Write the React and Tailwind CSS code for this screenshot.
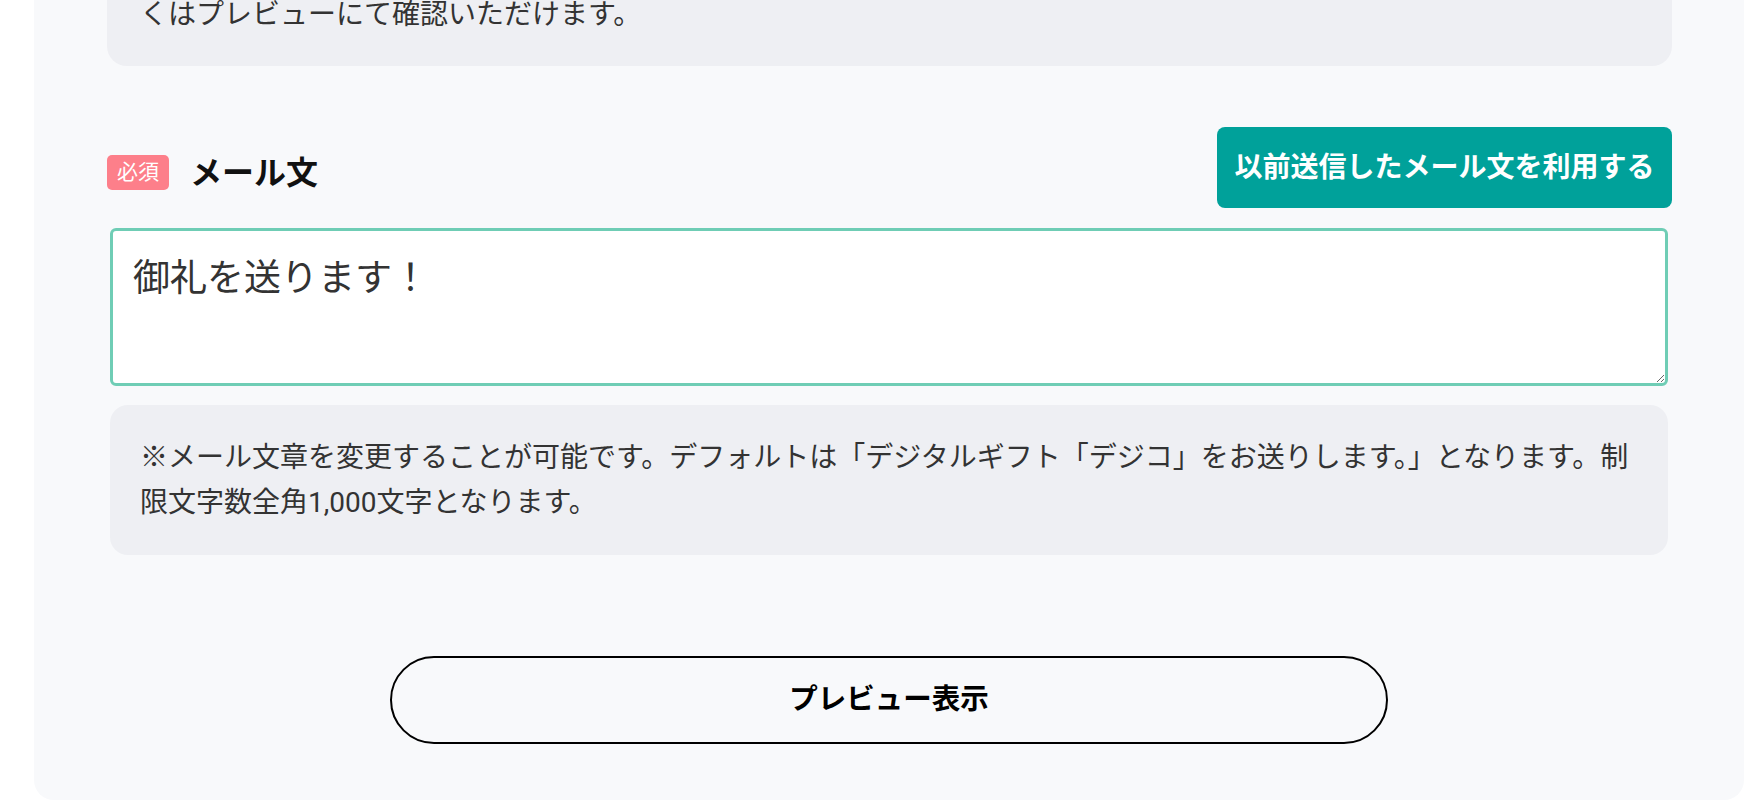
import React from "react";

const FONT = { fontFamily: '"Roboto", "Noto Sans CJK JP", sans-serif' };

const RequiredBadge = () => (
	<span className="flex h-[35px] items-center rounded-[5px] bg-[#fd7f8a] px-[10px] text-[21px] leading-none text-white">
		必須
	</span>
);

const App = () => {
	return (
		<div className="h-[802px] overflow-hidden bg-white" style={FONT}>
			<div className="-mt-[60px] mr-[18px] ml-[34px] rounded-b-[20px] bg-[#f8f9fb] px-[72px] pb-[56px]">
				{/* previous note, top part scrolled off */}
				<div className="ml-[1px] rounded-b-[20px] bg-[#eeeff3] px-[33px] pt-[61px] pb-[37px] text-[28px] leading-[28px] text-[#333]">
					くはプレビューにて確認いただけます。
				</div>

				{/* header */}
				<div className="mt-[61px] ml-[1px] flex items-center justify-between">
					<div className="flex items-center gap-[21px] pt-[10px]">
						<RequiredBadge />
						<h2 className="text-[32px] font-bold leading-none text-[#111]">
							メール文
						</h2>
					</div>
					<button className="flex h-[81px] w-[455px] items-center justify-center rounded-[8px] bg-[#00a19a] text-[28px] font-bold text-white">
						以前送信したメール文を利用する
					</button>
				</div>

				<textarea
					defaultValue="御礼を送ります！"
					className="mx-[4px] mt-[20px] block h-[158px] w-[calc(100%-8px)] rounded-[6px] border-[3px] border-[#6fcdb5] bg-white px-[20px] pt-[20px] text-[37px] leading-[1.5] text-[#333] outline-none"
					style={FONT}
				/>

				<div className="mx-[4px] mt-[19px] rounded-[18px] bg-[#eeeff3] py-[30px] pr-[14px] pl-[30px] text-[28px] leading-[45px] text-[#333]">
					※メール文章を変更することが可能です。デフォルトは「デジタルギフト「デジコ」をお送りします。」となります。制限文字数全角1,000文字となります。
				</div>

				<div className="mt-[101px] flex justify-center">
					<button className="flex h-[88px] w-[998px] items-center justify-center rounded-full border-2 border-black text-[28.5px] font-bold text-black">
						プレビュー表示
					</button>
				</div>
			</div>
		</div>
	);
};

export default App;
